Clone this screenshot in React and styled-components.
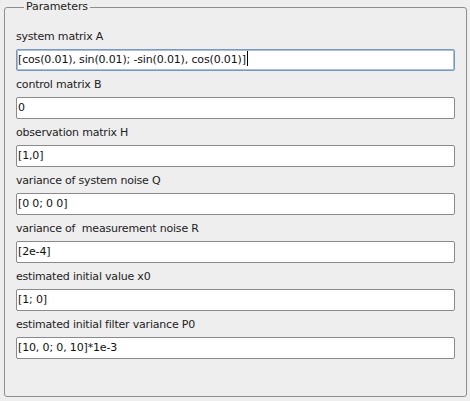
import styled, { createGlobalStyle } from "styled-components";

const Global = createGlobalStyle`
  html, body {
    margin: 0;
    padding: 0;
    background: #eeeeee;
  }
  body {
    width: 470px;
    height: 401px;
    overflow: hidden;
    font-family: "DejaVu Sans", "Liberation Sans", sans-serif;
  }
`;

const Frame = styled.fieldset`
  box-sizing: border-box;
  margin: 0 4px 0 4px;
  width: 463px;
  height: 397px;
  padding: 16px 11px 0 11px;
  border: 1px solid #8e8e8e;
  border-radius: 3px;
`;

const Legend = styled.legend`
  margin-left: 8px;
  padding: 0 2px;
  font-size: 11px;
  line-height: 14px;
  color: #222;
  letter-spacing: -0.1px;
`;

const List = styled.div`
  display: flex;
  flex-direction: column;
  gap: 7px;
`;

const Group = styled.div`
  display: flex;
  flex-direction: column;
  gap: 6px;
`;

const Label = styled.label`
  font-size: 11px;
  line-height: 13px;
  color: #222;
  letter-spacing: -0.2px;
  white-space: pre;
`;

const Field = styled.div`
  box-sizing: border-box;
  width: 439px;
  height: 22px;
  background: #fff;
  border: 1px solid ${(p) => (p.$focus ? "#7a97bd" : "#8a8a8a")};
  border-radius: 2px;
  box-shadow: ${(p) => (p.$focus ? "inset 0 0 0 1px #a9bfd9" : "none")};
  padding: 0 1px;
  font-size: 11px;
  line-height: 20px;
  color: #111;
  letter-spacing: -0.15px;
  white-space: pre;
  overflow: hidden;
`;

const Caret = styled.span`
  display: inline-block;
  width: 1px;
  height: 15px;
  background: #000;
  vertical-align: -3px;
  margin-left: 1px;
`;

const params = [
  ["system matrix A", "[cos(0.01), sin(0.01); -sin(0.01), cos(0.01)]"],
  ["control matrix B", "0"],
  ["observation matrix H", "[1,0]"],
  ["variance of system noise Q", "[0 0; 0 0]"],
  ["variance of  measurement noise R", "[2e-4]"],
  ["estimated initial value x0", "[1; 0]"],
  ["estimated initial filter variance P0", "[10, 0; 0, 10]*1e-3"],
];

export default function App() {
  return (
    <>
      <Global />
      <Frame>
        <Legend>Parameters</Legend>
        <List>
          {params.map(([label, value], i) => (
            <Group key={label}>
              <Label>{label}</Label>
              <Field $focus={i === 0}>
                {value}
                {i === 0 && <Caret />}
              </Field>
            </Group>
          ))}
        </List>
      </Frame>
    </>
  );
}
